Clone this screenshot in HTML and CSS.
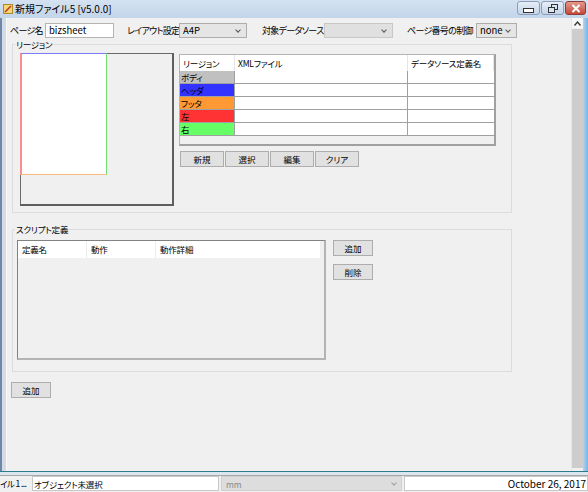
FILE: index.html
```html
<!DOCTYPE html>
<html lang="ja">
<head>
    <meta charset="UTF-8">
    <title>新規ファイル5 [v5.0.0]</title>
    <link rel="stylesheet" href="styles.css">
</head>
<body>
<div class="window">
    <!-- title bar -->
    <div class="titlebar">
        <svg class="app-icon" width="10" height="10" viewBox="0 0 10 10">
            <rect x="0.5" y="0.5" width="9" height="9" fill="#f7d774" stroke="#b08a2a"/>
            <path d="M2 8 L8 2" stroke="#c0392b" stroke-width="1.6"/>
        </svg>
        <span class="title">新規ファイル5 [v5.0.0]</span>
        <div class="caption-btns">
            <div class="cbtn"><span class="min-bar"></span></div>
            <div class="cbtn">
                <svg width="10" height="9" viewBox="0 0 10 9"><rect x="3.5" y="0.5" width="6" height="5" fill="none" stroke="#333"/><rect x="0.5" y="3.5" width="6" height="5" fill="#dbe6f3" stroke="#333"/></svg>
            </div>
            <div class="cbtn close">
                <svg width="10" height="9" viewBox="0 0 10 9"><path d="M1.5 1 L8.5 8 M8.5 1 L1.5 8" stroke="#fff" stroke-width="2"/></svg>
            </div>
        </div>
    </div>

    <div class="frame">
        <div class="edge-left"></div>
        <div class="client">
            <!-- page settings row -->
            <div class="settings">
                <label class="l1">ページ名</label>
                <div class="textbox">bizsheet</div>
                <label class="l2">レイアウト設定</label>
                <div class="combo w68">A4P<span class="chev"></span></div>
                <label class="l3">対象データソース</label>
                <div class="combo w69 disabled"><span class="chev"></span></div>
                <label class="l4">ページ番号の制御</label>
                <div class="combo w41">none<span class="chev"></span></div>
            </div>

            <!-- region group -->
            <fieldset class="group region-group">
                <legend>リージョン</legend>
                <div class="region-body">
                    <div class="preview">
                        <div class="page"></div>
                    </div>
                    <div class="region-side">
                        <div class="grid-box">
                            <table class="grid">
                                <tr class="head"><td class="c1">リージョン</td><td class="c2">XMLファイル</td><td class="c3">データソース定義名</td></tr>
                                <tr><td class="body-c">ボディ</td><td></td><td></td></tr>
                                <tr><td class="header-c">ヘッダ</td><td></td><td></td></tr>
                                <tr><td class="footer-c">フッタ</td><td></td><td></td></tr>
                                <tr><td class="left-c">左</td><td></td><td></td></tr>
                                <tr><td class="right-c">右</td><td></td><td></td></tr>
                            </table>
                        </div>
                        <div class="btn-row">
                            <button class="btn w44">新規</button>
                            <button class="btn w44">選択</button>
                            <button class="btn w44">編集</button>
                            <button class="btn w44">クリア</button>
                        </div>
                    </div>
                </div>
            </fieldset>

            <!-- script group -->
            <fieldset class="group script-group">
                <legend>スクリプト定義</legend>
                <div class="script-body">
                    <div class="listview">
                        <div class="lv-head">
                            <span class="h1">定義名</span>
                            <span class="h2">動作</span>
                            <span class="h3">動作詳細</span>
                        </div>
                    </div>
                    <div class="side-btns">
                        <button class="btn w40">追加</button>
                        <button class="btn w40">削除</button>
                    </div>
                </div>
            </fieldset>

            <button class="btn w40 add-bottom">追加</button>
        </div>
        <div class="vscroll">
            <div class="arrow">
                <svg width="7" height="5" viewBox="0 0 7 5"><path d="M0.5 4.5 L3.5 1 L6.5 4.5" fill="none" stroke="#333" stroke-width="1.3"/></svg>
            </div>
            <div class="thumb"></div>
        </div>
        <div class="edge-right"></div>
    </div>
    <div class="frame-bottom"></div>

    <!-- status bar -->
    <div class="status">
        <div class="sb sb-file">イル 1 ...</div>
        <div class="sb sb-sel">オブジェクト未選択</div>
        <div class="sb sb-unit">mm<span class="chev"></span></div>
        <div class="sb sb-date">October 26, 2017</div>
    </div>
</div>
</body>
</html>
```

FILE: styles.css
```css
/* base */
html, body {
    margin: 0;
    padding: 0;
    width: 588px;
    height: 492px;
    overflow: hidden;
    background: #f0f0f0;
    font-family: "Noto Sans CJK JP", "Liberation Sans", sans-serif;
    font-size: 8.5px;
    letter-spacing: -0.2px;
    font-feature-settings: "palt";
    color: #000;
}

.window {
    display: flex;
    flex-direction: column;
    width: 588px;
    height: 492px;
}

/* title bar */
.titlebar {
    height: 18px;
    flex: none;
    display: flex;
    align-items: center;
    background: linear-gradient(#d4e2f1, #c3d5ea);
    padding-left: 3px;
}
.app-icon { margin-right: 2px; }
.title {
    font-size: 10px;
    letter-spacing: 0;
    line-height: 18px;
}
.caption-btns {
    margin-left: auto;
    display: flex;
    gap: 1px;
    padding-right: 2px;
    align-self: flex-start;
    margin-top: 1px;
}
.cbtn {
    width: 23px;
    height: 14px;
    border: 1px solid #8b9db8;
    border-radius: 3px;
    background: linear-gradient(#e6eef8, #c4d4e9);
    display: flex;
    align-items: center;
    justify-content: center;
    box-sizing: border-box;
}
.cbtn.close {
    width: 21px;
    border-color: #8d3a32;
    background: linear-gradient(#e39a8d, #c4493a);
}
.min-bar {
    display: block;
    width: 9px;
    height: 3px;
    background: #fff;
    border: 1px solid #333;
    margin-top: 4px;
}

/* window frame */
.frame {
    flex: 1;
    display: flex;
    min-height: 0;
}
.edge-left {
    width: 4px;
    flex: none;
    background: #d4dbe4;
    border-left: 2px solid #6f87a8;
    border-right: 1px solid #f8f8f8;
}
.edge-right {
    width: 5px;
    flex: none;
    background: linear-gradient(90deg, #b7d1ee, #71b6ea);
}
.frame-bottom {
    height: 3px;
    flex: none;
    border-top: 1px solid #2d7c8e;
    background: #dce6ee;
}
.client {
    flex: 1;
    padding: 5px 0 0 3px;
    min-width: 0;
}
.vscroll {
    width: 11px;
    flex: none;
    display: flex;
    flex-direction: column;
    background: #f0f0f0;
    border-left: 1px solid #e6e6e6;
}
.vscroll .arrow {
    height: 10px;
    display: flex;
    align-items: center;
    justify-content: center;
    background: #f7f7f7;
}
.vscroll .thumb {
    flex: 1;
    background: #cdcdcd;
    margin: 1px 0 3px 0;
}

/* settings row */
.settings {
    display: flex;
    align-items: center;
    height: 15px;
}
.settings label {
    white-space: nowrap;
    box-sizing: border-box;
    flex: none;
    font-size: 9px;
    letter-spacing: -0.7px;
    overflow: hidden;
}
.settings .l1 { width: 35px; }
.settings .l2 { width: 65px; padding-left: 13px; }
.settings .l3 { width: 77px; padding-left: 15px; }
.settings .l4 { width: 83px; padding-left: 14px; }
.textbox {
    width: 69px;
    height: 15px;
    box-sizing: border-box;
    border: 1px solid #b4b4b4;
    background: #fff;
    padding-left: 3px;
    line-height: 13px;
    font-size: 9.5px;
    letter-spacing: 0;
}
.combo {
    height: 15px;
    box-sizing: border-box;
    border: 1px solid #adadad;
    background: #e5e5e5;
    padding-left: 3px;
    line-height: 13px;
    font-size: 9.5px;
    letter-spacing: 0;
    display: flex;
    align-items: center;
    flex: none;
}
.combo.disabled { background: #e0e0e0; border-color: #c8c8c8; }
.w68 { width: 68px; }
.w69 { width: 69px; }
.w41 { width: 41px; }
.chev {
    margin-left: auto;
    margin-right: 6px;
    width: 3px;
    height: 3px;
    border-right: 1px solid #555;
    border-bottom: 1px solid #555;
    transform: translateY(-1px) rotate(45deg);
}

/* group boxes */
.group {
    margin: 0 0 0 2px;
    width: 500px;
    box-sizing: border-box;
    border: 1px solid #dcdcdc;
    padding: 0;
}
.group legend {
    padding: 0 1px;
    margin-left: 2px;
    line-height: 10px;
}
.region-group {
    margin-top: 1px;
    height: 174px;
}
.region-body {
    display: flex;
    padding: 4px 0 0 7px;
}
.preview {
    position: relative;
    width: 154px;
    height: 153px;
    box-sizing: border-box;
    border: 1px solid #6b6b6b;
    border-right: 2px solid #5e5e5e;
    border-bottom: 2px solid #5e5e5e;
    background: #f0f0f0;
}
/* page outline sits over the preview frame */
.page {
    position: absolute;
    left: -1px;
    top: -1px;
    width: 84px;
    height: 120px;
    background: #fff;
    border-top: 1px solid #7a7aff;
    border-left: 2px solid #ff8c8c;
    border-right: 1px solid #70e070;
    border-bottom: 1px solid #f7bb82;
}
.region-side {
    margin-left: 5px;
    padding-top: 1px;
    display: flex;
    flex-direction: column;
}
.grid-box {
    width: 317px;
    height: 92px;
    box-sizing: border-box;
    border: 1px solid #b4b4b4;
    border-right: 2px solid #a0a0a0;
    border-bottom: 2px solid #a0a0a0;
    background: #f0f0f0;
}
.grid {
    border-collapse: collapse;
    table-layout: fixed;
    width: 314px;
}
.grid td {
    padding: 0 0 0 1px;
    height: 12px;
    line-height: 12px;
    border: 1px solid #a0a0a0;
    background: #fff;
    white-space: nowrap;
    overflow: hidden;
}
.grid tr.head td {
    height: 16px;
    line-height: 16px;
    border: none;
    border-right: 1px solid #e6e6e6;
    padding-left: 3px;
}
.grid tr:nth-child(2) td { border-top: none; }
.grid .c1 { width: 51px; }
.grid .c2 { width: 169px; }
.grid td:first-child { border-left: none; }
.grid td:last-child { border-right: none; }
.grid .body-c { background: #c0c0c0; }
.grid .header-c { background: #3333ff; }
.grid .footer-c { background: #ff9933; }
.grid .left-c { background: #ff3333; }
.grid .right-c { background: #66ff66; }

.btn-row {
    display: flex;
    gap: 1px;
    margin-top: 5px;
    padding-left: 1px;
}
.btn {
    height: 16px;
    box-sizing: border-box;
    border: 1px solid #adadad;
    background: #e1e1e1;
    font-family: inherit;
    font-size: 8.5px;
    font-feature-settings: "palt";
    line-height: 13px;
    padding: 0;
    color: #000;
}
.w44 { width: 44px; }
.w40 { width: 40px; }

/* script group */
.script-group {
    margin-top: 11px;
    height: 148px;
}
.script-body {
    display: flex;
    padding: 6px 0 0 4px;
}
.listview {
    width: 309px;
    height: 120px;
    box-sizing: border-box;
    border: 1px solid #828282;
    border-right: 2px solid #b4b4b4;
    border-bottom: 2px solid #b4b4b4;
    background: #f0f0f0;
}
.lv-head {
    display: flex;
    width: 302px;
    height: 17px;
    background: #fff;
    line-height: 17px;
}
.lv-head span {
    border-right: 1px solid #ececec;
    padding-left: 4px;
    box-sizing: border-box;
}
.lv-head .h1 { width: 69px; }
.lv-head .h2 { width: 69px; }
.lv-head .h3 { flex: 1; border-right: none; }
.side-btns {
    display: flex;
    flex-direction: column;
    gap: 8px;
    margin-left: 7px;
}
.add-bottom {
    margin: 10px 0 0 1px;
    display: block;
}

/* status bar */
.status {
    height: 16px;
    flex: none;
    display: flex;
    gap: 2px;
    background: #f0f0f0;
    border-top: 1px solid #a7a7a7;
}
.sb {
    height: 15px;
    line-height: 14px;
    box-sizing: border-box;
    white-space: nowrap;
    overflow: hidden;
}
.sb-file { width: 30px; letter-spacing: -0.6px; }
.sb-sel {
    width: 187px;
    background: #fff;
    border: 1px solid #c8c8c8;
    padding-left: 1px;
}
.sb-unit {
    width: 181px;
    background: #dddddd;
    color: #8a8a8a;
    padding-left: 4px;
    display: flex;
    align-items: center;
    border: 1px solid #d0d0d0;
}
.sb-unit .chev { border-color: #a0a0a0; margin-right: 5px; }
.sb-date {
    flex: 1;
    text-align: right;
    background: #fff;
    border: 1px solid #c8c8c8;
    padding-right: 1px;
    font-size: 10px;
    letter-spacing: 0;
}
```
